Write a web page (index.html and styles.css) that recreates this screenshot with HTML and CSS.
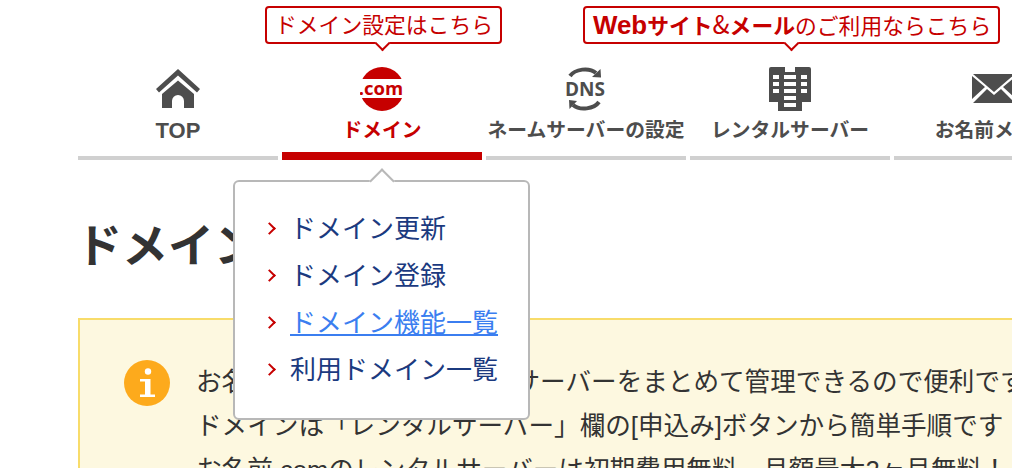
FILE: index.html
```html
<!DOCTYPE html>
<html lang="ja">
<head>
  <meta charset="UTF-8" />
  <title>ドメイン機能一覧</title>
  <link rel="stylesheet" href="styles.css">
</head>
<body>
  <!-- Global nav -->
  <nav class="gnav">
    <div class="balloon balloon-domain">ドメイン設定はこちら</div>
    <div class="balloon balloon-server"><b><span class="latin">Web</span>サイト</b><span class="amp">&amp;</span><b>メール</b>のご利用ならこちら</div>

    <a class="gnav-item" href="#">
      <svg class="gnav-icon" viewBox="0 0 44 44">
        <path d="M0 22 L22 2 L44 22 L41 25.500 L22 8.500 L3 25.500 Z" fill="#4d4d4d"/>
        <path d="M6 27 L22 13.500 L38 27 V41 H28 V34 A6 6 0 0 0 16 34 V41 H6 Z" fill="#4d4d4d"/>
      </svg>
      <span class="gnav-top">TOP</span>
    </a>
    <a class="gnav-item active" href="#">
      <svg class="gnav-icon" viewBox="0 0 44 44">
        <circle cx="22" cy="22" r="22" fill="#c60000"/>
        <rect x="0" y="12" width="44" height="19" fill="#fff"/>
        <text class="icon-com" x="21" y="28" text-anchor="middle">.com</text>
      </svg>
      <span>ドメイン</span>
    </a>
    <a class="gnav-item" href="#">
      <svg class="gnav-icon" viewBox="0 0 44 44">
        <path d="M6 9 C11 2 25 0 32 6" fill="none" stroke="#4d4d4d" stroke-width="4"/>
        <path d="M28 10 L37 10.500 L36.500 2 Z" fill="#4d4d4d"/>
        <path d="M35 35 C30 42 16 44 9 38" fill="none" stroke="#4d4d4d" stroke-width="4"/>
        <path d="M5 33 L13 34 L5.500 42 Z" fill="#4d4d4d"/>
        <text class="icon-dns" x="21" y="28.500" text-anchor="middle">DNS</text>
      </svg>
      <span>ネームサーバーの設定</span>
    </a>
    <a class="gnav-item" href="#">
      <svg class="gnav-icon" viewBox="0 0 44 44">
        <path d="M3 0 H17 V5 H27 V0 H41 Q43 0 43 2 V35 H34 V44 H10 V35 H1 V2 Q1 0 3 0 Z" fill="#4d4d4d"/>
        <path d="M5 8 H11 V12 H5 Z M16 8 H28 V12 H16 Z M33 8 H39 V12 H33 Z M5 15 H11 V19 H5 Z M16 15 H28 V19 H16 Z M33 15 H39 V19 H33 Z M5 22 H11 V26 H5 Z M16 22 H28 V26 H16 Z M33 22 H39 V26 H33 Z M16 29 H28 V33 H16 Z M16 36 H28 V40 H16 Z" fill="#fff"/>
      </svg>
      <span>レンタルサーバー</span>
    </a>
    <a class="gnav-item" href="#">
      <svg class="gnav-icon" viewBox="0 0 44 44">
        <path d="M1 7 H43 L22 25 Z M0 9 L13 20 L0 32 Z M44 9 L31 20 L44 32 Z M15 22 L22 28 L29 22 L43 36 H1 Z" fill="#4d4d4d"/>
      </svg>
      <span>お名前メール</span>
    </a>

    <!-- Domain dropdown -->
    <div class="dropdown">
      <ul>
        <li><a href="#">ドメイン更新</a></li>
        <li><a href="#">ドメイン登録</a></li>
        <li><a class="hover" href="#">ドメイン機能一覧</a></li>
        <li><a href="#">利用ドメイン一覧</a></li>
      </ul>
    </div>
  </nav>

  <main class="content">
    <h1>ドメイン機能一覧</h1>
    <div class="notice">
      <svg class="notice-icon" viewBox="0 0 46 46">
        <circle cx="23" cy="23" r="23" fill="#fdaa1c"/>
        <circle cx="24" cy="11.500" r="3.200" fill="#fff"/>
        <path d="M16 19 H26.500 V34.500 H31 V37 H16 V34.500 H21 V21.500 H16 Z" fill="#fff"/>
      </svg>
      <div class="notice-text">
        <p>お名前.com ならドメインとサーバーをまとめて管理できるので便利です</p>
        <p>ドメインは「レンタルサーバー」欄の[申込み]ボタンから簡単手順です</p>
        <p>お名前.comのレンタルサーバーは初期費用無料、月額最大2ヶ月無料！</p>
      </div>
    </div>
  </main>
</body>
</html>
```

FILE: styles.css
```css
html, body {
  margin: 0;
  height: 468px;
  overflow: hidden;
}
body {
  background: #fff;
  color: #333;
  font-family: "Liberation Sans", "Noto Sans CJK JP", sans-serif;
}
a {
  text-decoration: none;
}
.gnav {
  position: relative;
  display: flex;
  gap: 4px;
  width: 1100px;
  height: 160px;
  padding-left: 78px;
  align-items: flex-end;
}
.gnav-item {
  flex: 0 0 200px;
  box-sizing: border-box;
  height: 93px;
  display: flex;
  flex-direction: column;
  align-items: center;
  color: #4d4d4d;
  font-size: 19.800px;
  font-weight: bold;
  line-height: 26px;
  white-space: nowrap;
  border-bottom: 4px solid #d0d0d0;
}
.gnav-item span {
  margin-top: 6px;
}
.gnav-item .gnav-top {
  margin-top: 7px;
  font-size: 22px;
}
.gnav-icon {
  width: 44px;
  height: 44px;
  flex: none;
}
.gnav-item.active {
  color: #c60000;
  border-bottom: 8px solid #c60000;
}
.icon-com {
  font-family: "Open Sans", sans-serif;
  font-size: 18.500px;
  font-weight: bold;
  fill: #c60000;
}
.icon-dns {
  font-family: "Open Sans", sans-serif;
  font-size: 19px;
  font-weight: bold;
  fill: #4d4d4d;
}
.balloon {
  position: absolute;
  top: 6px;
  box-sizing: border-box;
  height: 38px;
  padding: 0 8px;
  border: 2px solid #c60000;
  border-radius: 4px;
  background: #fff;
  color: #c60000;
  font-size: 21.800px;
  line-height: 35px;
  white-space: nowrap;
}
.balloon::after {
  content: "";
  position: absolute;
  bottom: -7px;
  width: 9px;
  height: 9px;
  background: #fff;
  border-right: 2px solid #c60000;
  border-bottom: 2px solid #c60000;
  transform: rotate(45deg);
}
.balloon .latin {
  font-size: 25.900px;
}
.balloon .amp {
  font-family: "Noto Sans CJK JP", sans-serif;
  font-size: 25px;
  line-height: 1;
}
.balloon-domain {
  left: 265px;
  width: 237px;
}
.balloon-domain::after {
  left: 110px;
}
.balloon-server {
  left: 583px;
  width: 417px;
}
.balloon-server::after {
  left: 201px;
}
.dropdown {
  position: absolute;
  z-index: 2;
  top: 180px;
  left: 233px;
  box-sizing: border-box;
  width: 297px;
  height: 240px;
  padding: 24px 0 0 55px;
  background: #fff;
  border: 2px solid #b8b8b8;
  border-radius: 6px;
}
.dropdown::before {
  content: "";
  position: absolute;
  top: -10px;
  left: 138px;
  width: 16px;
  height: 16px;
  background: #fff;
  border-top: 2px solid #b8b8b8;
  border-left: 2px solid #b8b8b8;
  transform: rotate(45deg);
}
.dropdown ul {
  margin: 0;
  padding: 0;
  list-style: none;
}
.dropdown li {
  position: relative;
  height: 47px;
  line-height: 47px;
  font-size: 26px;
  white-space: nowrap;
}
.dropdown li::before {
  content: "";
  position: absolute;
  top: 18px;
  left: -25px;
  width: 7px;
  height: 7px;
  border-top: 2px solid #c60000;
  border-right: 2px solid #c60000;
  transform: rotate(45deg);
}
.dropdown a {
  color: #1b3a7f;
}
.dropdown a.hover {
  color: #3b7ef0;
  text-decoration: underline;
}
.content {
  padding-left: 78px;
}
h1 {
  margin: 63px 0 49px -2px;
  font-size: 46px;
  line-height: 46px;
  color: #333;
  white-space: nowrap;
}
.notice {
  display: flex;
  gap: 26px;
  box-sizing: border-box;
  width: 1000px;
  padding: 40px 0 0 44px;
  background: #fdf8e0;
  border: 2px solid #f8dc6a;
}
.notice-icon {
  width: 46px;
  height: 46px;
  flex: none;
}
.notice-text {
  font-size: 25.600px;
  white-space: nowrap;
}
.notice-text p {
  margin: 0;
  line-height: 44px;
}
```
